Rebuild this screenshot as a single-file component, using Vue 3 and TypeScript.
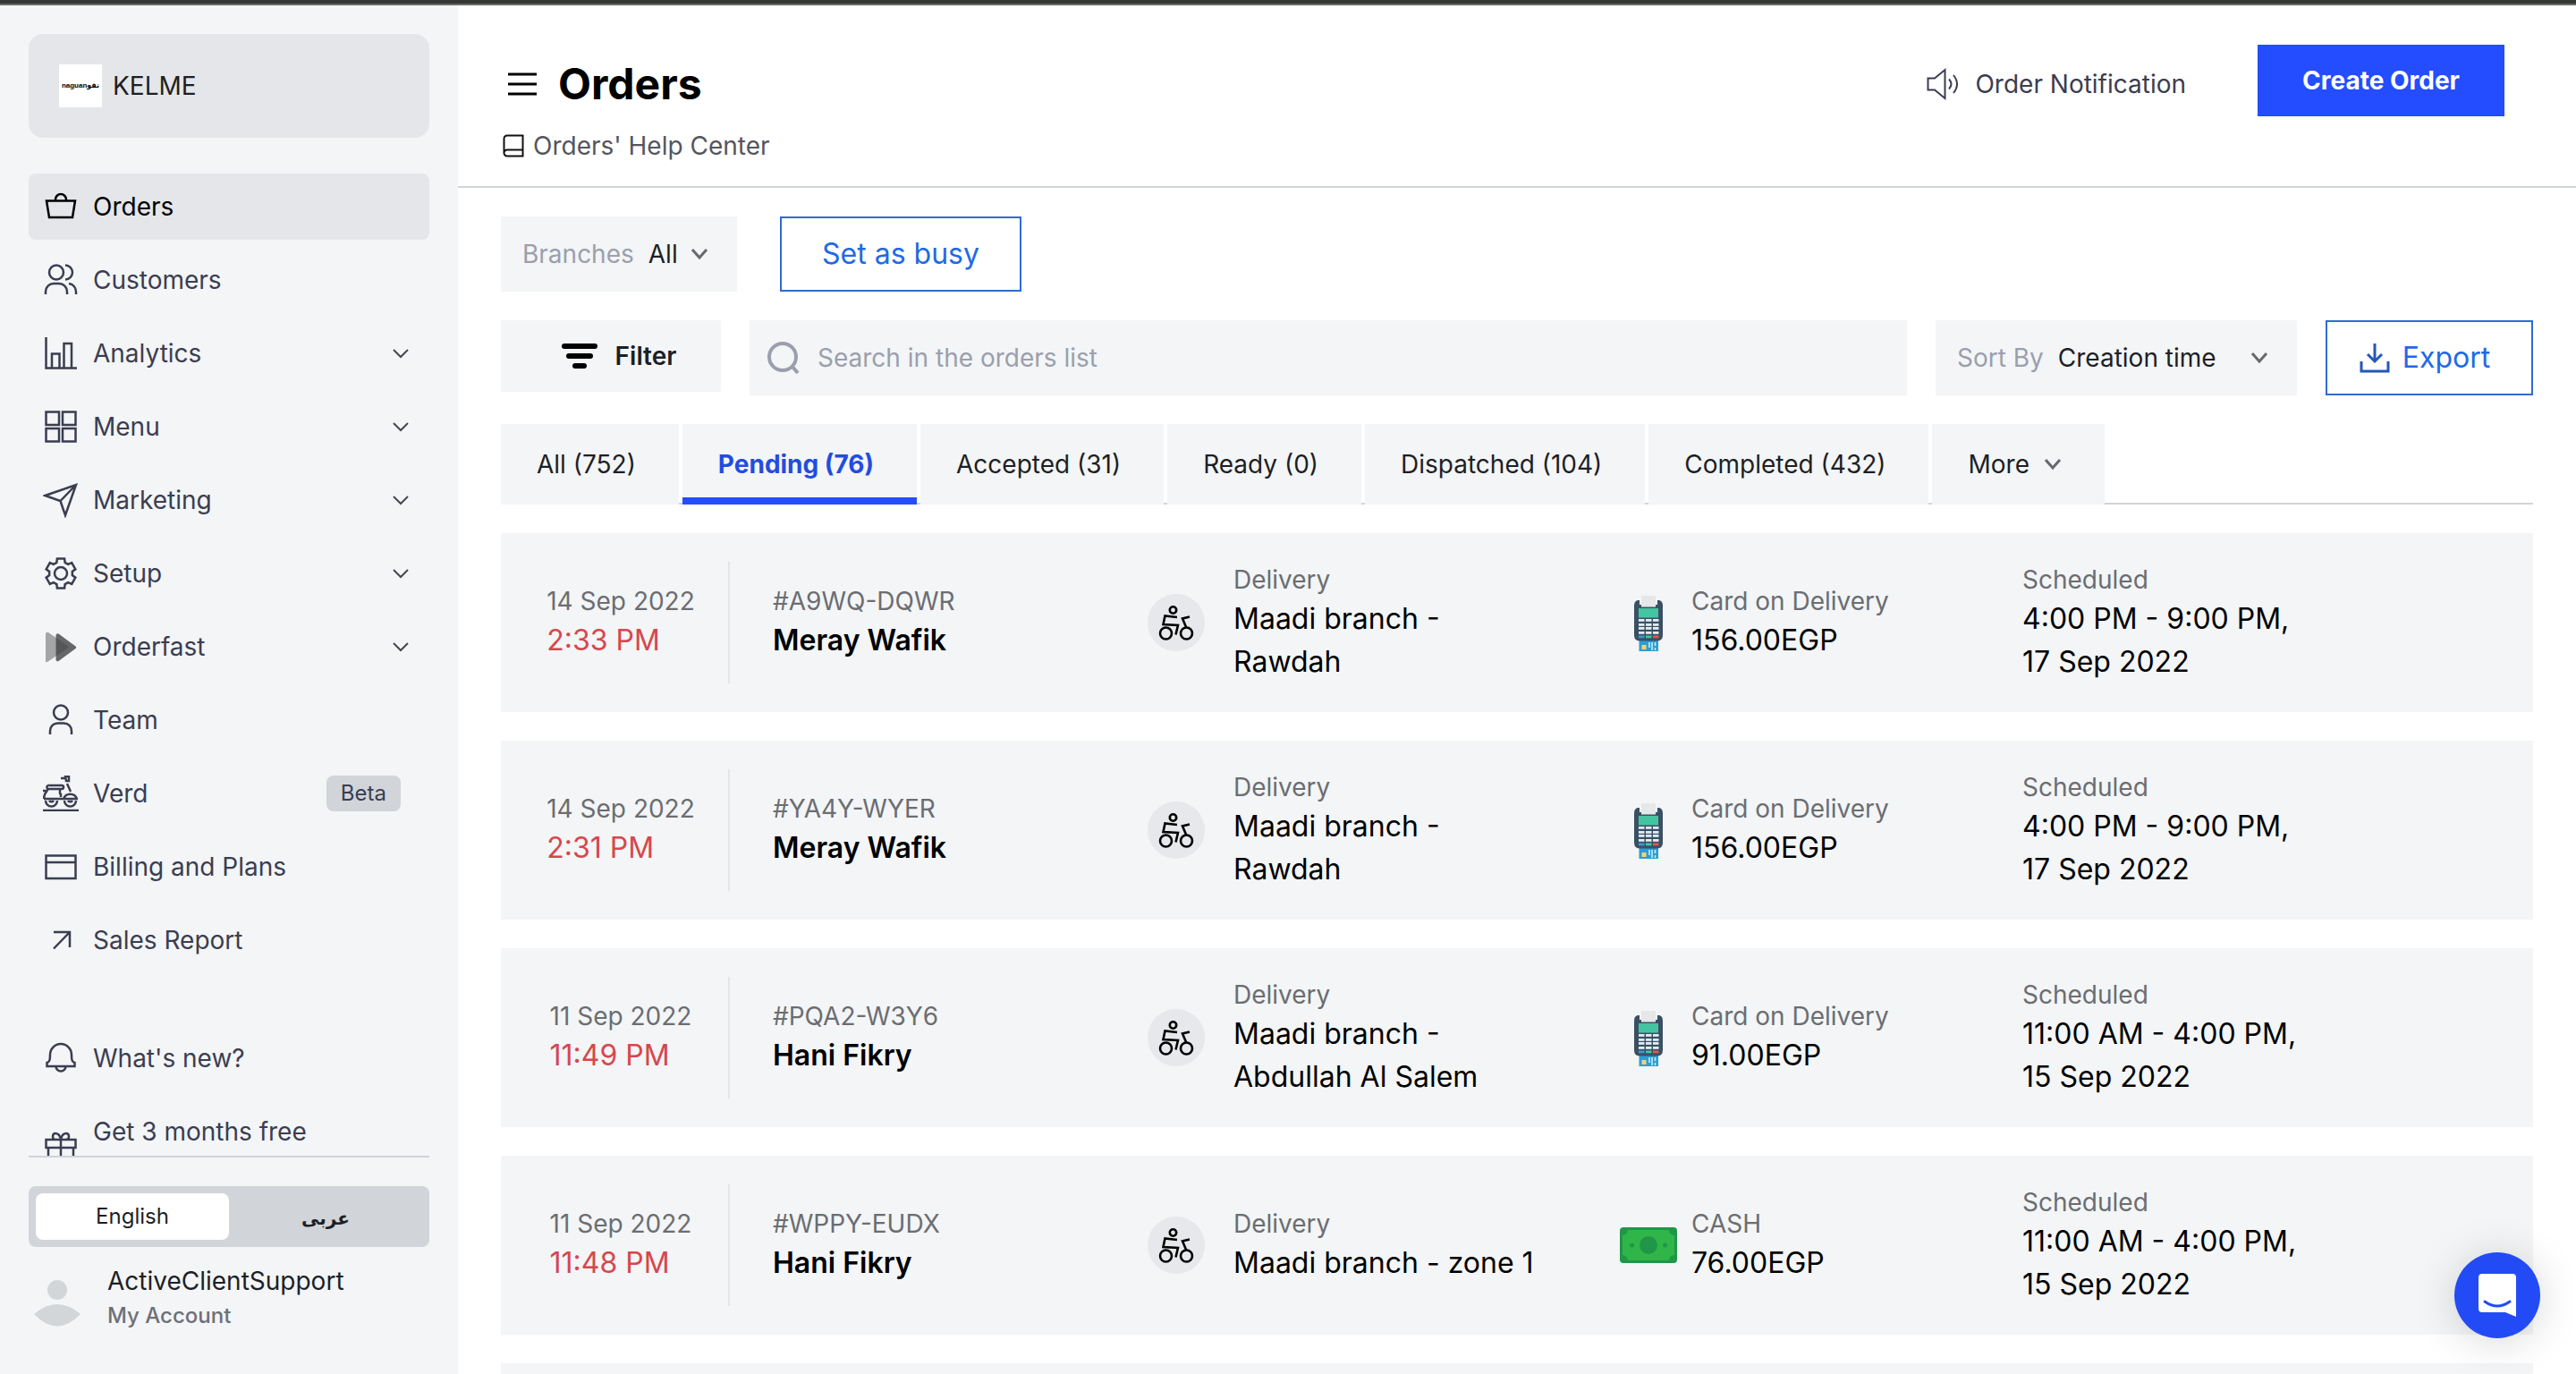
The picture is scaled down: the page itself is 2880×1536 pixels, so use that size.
<script setup lang="ts">
import { ref } from 'vue'

interface NavItem {
  label: string
  icon: string
  expandable?: boolean
  badge?: string
  active?: boolean
}

interface Order {
  date: string
  time: string
  code: string
  customer: string
  branch: string
  payment: string
  amount: string
  slot: string
  day: string
}

// Outline of a six-tooth cog centred in a 40-unit box.
function cogPath(): string {
  const point = (radius: number, degrees: number): string => {
    const angle = (degrees * Math.PI) / 180
    return `${(20 + radius * Math.cos(angle)).toFixed(2)} ${(20 + radius * Math.sin(angle)).toFixed(2)}`
  }
  const points: string[] = []
  for (let tooth = 0; tooth < 6; tooth++) {
    const mid = -90 + tooth * 60
    points.push(point(13, mid - 21), point(17, mid - 14), point(17, mid + 14), point(13, mid + 21))
  }
  return `M${points.join('L')}Z`
}

const iconPaths: Record<string, string> = {
  basket: 'M4 13.500H36L33 32H7ZM14 13.500V12a6 6 0 0 1 12 0v1.500',
  people:
    'M15 3.500a8 8 0 1 0 0 16a8 8 0 1 0 0-16ZM25 3.500a8 8 0 0 1 0 16M3 36v-3a9 9 0 0 1 9-9h6a9 9 0 0 1 9 9v3M29 24a9 9 0 0 1 8 9v3',
  chart: 'M3.500 2V36.500H38M10 36V20.500h8.500V36M23.500 36V9h8.500V36',
  grid: 'M3.500 3.500h14.500v14.500h-14.500ZM22 3.500h14.500v14.500h-14.500ZM3.500 22h14.500v14.500h-14.500ZM22 22h14.500v14.500h-14.500Z',
  plane: 'M2.500 15L37 3L25 37L19.500 21ZM19.500 21L37 3',
  cog: cogPath() + 'M20 13a7 7 0 1 0 0 14a7 7 0 1 0 0-14Z',
  person: 'M20 3.500a8 8 0 1 0 0 16a8 8 0 1 0 0-16ZM8 36v-4a8.500 8.500 0 0 1 8.500-8.500h7a8.500 8.500 0 0 1 8.500 8.500v4',
  card: 'M3.500 7.500h33v25.500h-33ZM3.500 15h33',
  arrow: 'M12 11H30V28M30 11L12 29.500',
  bell: 'M4.500 29v-4c3-1 3.500-3 3.500-9a12 12 0 0 1 24 0c0 6 .500 8 3.500 9v4ZM14.500 29a5.500 5.500 0 0 0 11 0',
  gift: 'M3.500 10h33v9h-33ZM6 19v17h28V19M20 10V36M20 10c-1-5-3-7-6-7c-4 0-4 7 0 7M20 10c1-5 3-7 6-7c4 0 4 7 0 7',
}

const mainNav: NavItem[] = [
  { label: 'Orders', icon: 'basket', active: true },
  { label: 'Customers', icon: 'people' },
  { label: 'Analytics', icon: 'chart', expandable: true },
  { label: 'Menu', icon: 'grid', expandable: true },
  { label: 'Marketing', icon: 'plane', expandable: true },
  { label: 'Setup', icon: 'cog', expandable: true },
  { label: 'Orderfast', icon: 'play', expandable: true },
  { label: 'Team', icon: 'person' },
  { label: 'Verd', icon: 'scooter', badge: 'Beta' },
  { label: 'Billing and Plans', icon: 'card' },
  { label: 'Sales Report', icon: 'arrow' },
]

const tabs = ['All (752)', 'Pending (76)', 'Accepted (31)', 'Ready (0)', 'Dispatched (104)', 'Completed (432)']
const activeTab = ref('Pending (76)')
const language = ref<'en' | 'ar'>('en')
const branch = ref('All')
const sortBy = ref('Creation time')
const query = ref('')

const orders: Order[] = [
  { date: '14 Sep 2022', time: '2:33 PM', code: '#A9WQ-DQWR', customer: 'Meray Wafik', branch: 'Maadi branch - Rawdah', payment: 'Card on Delivery', amount: '156.00EGP', slot: '4:00 PM - 9:00 PM,', day: '17 Sep 2022' },
  { date: '14 Sep 2022', time: '2:31 PM', code: '#YA4Y-WYER', customer: 'Meray Wafik', branch: 'Maadi branch - Rawdah', payment: 'Card on Delivery', amount: '156.00EGP', slot: '4:00 PM - 9:00 PM,', day: '17 Sep 2022' },
  { date: '11 Sep 2022', time: '11:49 PM', code: '#PQA2-W3Y6', customer: 'Hani Fikry', branch: 'Maadi branch - Abdullah Al Salem', payment: 'Card on Delivery', amount: '91.00EGP', slot: '11:00 AM - 4:00 PM,', day: '15 Sep 2022' },
  { date: '11 Sep 2022', time: '11:48 PM', code: '#WPPY-EUDX', customer: 'Hani Fikry', branch: 'Maadi branch - zone 1', payment: 'CASH', amount: '76.00EGP', slot: '11:00 AM - 4:00 PM,', day: '15 Sep 2022' },
]

const keyRows = [28, 33, 37, 42]
const keyColumns = [21, 29, 37]
</script>

<template>
  <div class="app">
    <div class="window-edge"></div>
    <div class="shell">
      <aside class="sidebar">
        <button class="store" type="button">
          <span class="store-logo" aria-hidden="true">naguanتقو</span>
          <span>KELME</span>
        </button>

        <nav class="nav" aria-label="Main">
          <a v-for="item in mainNav" :key="item.label" href="#" class="nav-item" :class="{ active: item.active }">
            <svg v-if="item.icon === 'play'" class="nav-icon" viewBox="0 0 40 40" aria-hidden="true">
              <path d="M3 5.500a2 2 0 0 1 3-1.500l22 15a1.500 1.500 0 0 1 0 2.500L5 37H3Z" fill="#444" opacity=".45" />
              <path d="M14.500 7a2 2 0 0 1 3-1.500l19 14a1.500 1.500 0 0 1 0 2.500l-19 14a2 2 0 0 1-3-1.500Z" fill="#444" opacity=".8" />
            </svg>
            <svg v-else-if="item.icon === 'scooter'" class="nav-icon line" viewBox="0 0 40 40" aria-hidden="true">
              <path d="M0 39H40M1 26H39M1 26c0-6 3-8 5-11h14M19 15v5l1 1v3M23 26a8 8 0 0 1 15 0M27 9l4 9M20 3h5M25 1h4v5h-3ZM0 17h4M7 11h14a2 2 0 0 1 0 4H6a2 2 0 0 1 1-4" />
              <path d="M3 28a6 6 0 0 0 13 0M7 28a3 3 0 0 0 5 0M24 28a6 6 0 0 0 13 0M28 28a3 3 0 0 0 5 0" />
            </svg>
            <svg v-else class="nav-icon line" viewBox="0 0 40 40" aria-hidden="true">
              <path :d="iconPaths[item.icon]" />
            </svg>
            <span class="nav-label">{{ item.label }}</span>
            <svg v-if="item.expandable" class="nav-chevron" viewBox="0 0 20 12" aria-hidden="true">
              <path d="M2 2L10 10L18 2" />
            </svg>
            <span v-if="item.badge" class="badge">{{ item.badge }}</span>
          </a>

          <a href="#" class="nav-item secondary">
            <svg class="nav-icon line" viewBox="0 0 40 40" aria-hidden="true"><path :d="iconPaths.bell" /></svg>
            <span class="nav-label">What's new?</span>
          </a>
          <a href="#" class="nav-item tall">
            <svg class="nav-icon line" viewBox="0 0 40 40" aria-hidden="true"><path :d="iconPaths.gift" /></svg>
            <span class="nav-label">Get 3 months free</span>
          </a>
        </nav>

        <div class="sidebar-foot">
          <div class="language" role="group" aria-label="Language">
            <button type="button" :class="{ chosen: language === 'en' }" @click="language = 'en'">English</button>
            <button type="button" lang="ar" class="arabic" :class="{ chosen: language === 'ar' }" @click="language = 'ar'">عربى</button>
          </div>
          <a href="#" class="account">
            <svg class="avatar" viewBox="0 0 52 52" aria-hidden="true">
              <circle cx="26" cy="11" r="11" />
              <path d="M0 38Q26 16 52 38Q26 65 0 38Z" />
            </svg>
            <span class="account-text">
              <span class="account-name">ActiveClientSupport</span>
              <span class="account-sub">My Account</span>
            </span>
          </a>
        </div>
      </aside>

      <main class="main">
        <header class="header">
          <div class="heading">
            <div class="title-row">
              <button class="menu-button" type="button" aria-label="Toggle menu">
                <svg viewBox="0 0 32 32" aria-hidden="true"><path d="M0 5H32M0 16H32M0 27H32" /></svg>
              </button>
              <h1>Orders</h1>
            </div>
            <a href="#" class="help">
              <svg viewBox="0 0 24 26" aria-hidden="true">
                <path d="M22.500 1.500H5a3.500 3.500 0 0 0-3.500 3.500V21a3.500 3.500 0 0 0 3.500 3.500H22.500ZM22.500 17.500H5a3.500 3.500 0 0 0-3.500 3.500" />
              </svg>
              Orders' Help Center
            </a>
          </div>
          <div class="header-actions">
            <button class="notify" type="button">
              <svg viewBox="0 0 38 38" aria-hidden="true">
                <path d="M1.500 12.500H9L20.500 3V35L9 25.500H1.500ZM25 13.500q5 5.500 0 11M30 9q8 10 0 20" />
              </svg>
              Order Notification
            </button>
            <button class="create" type="button">Create Order</button>
          </div>
        </header>

        <div class="content">
          <div class="row branch-row">
            <div class="picker branch-picker">
              <label for="branch">Branches</label>
              <select id="branch" v-model="branch">
                <option>All</option>
              </select>
              <svg class="chevron" viewBox="0 0 20 14" aria-hidden="true"><path d="M2 2L10 11L18 2" /></svg>
            </div>
            <button class="outline busy" type="button">Set as busy</button>
          </div>

          <div class="row tools-row">
            <button class="filter" type="button">
              <svg viewBox="0 0 40 28" aria-hidden="true"><path d="M3 3H37M8 14H32M15 25H25" /></svg>
              Filter
            </button>
            <div class="search">
              <svg viewBox="0 0 38 38" aria-hidden="true"><path d="M17 3a15 15 0 1 0 0 30a15 15 0 1 0 0-30ZM28 29L34 36" /></svg>
              <input v-model="query" type="search" placeholder="Search in the orders list" aria-label="Search in the orders list" />
            </div>
            <div class="picker sort-picker">
              <label for="sort">Sort By</label>
              <select id="sort" v-model="sortBy">
                <option>Creation time</option>
              </select>
              <svg class="chevron" viewBox="0 0 20 14" aria-hidden="true"><path d="M2 2L10 11L18 2" /></svg>
            </div>
            <button class="outline export" type="button">
              <svg viewBox="0 0 34 34" aria-hidden="true"><path d="M17 1V21M9 13L17 21L25 13M2 21V32H32V21" /></svg>
              Export
            </button>
          </div>

          <div class="tabs" role="tablist">
            <button v-for="tab in tabs" :key="tab" type="button" role="tab" class="tab" :class="{ current: tab === activeTab }" :aria-selected="tab === activeTab" @click="activeTab = tab">
              {{ tab }}
            </button>
            <button type="button" class="tab more">
              More
              <svg class="chevron" viewBox="0 0 20 14" aria-hidden="true"><path d="M2 2L10 11L18 2" /></svg>
            </button>
          </div>

          <ul class="orders">
            <li v-for="order in orders" :key="order.code" class="order">
              <div class="cell when">
                <div>
                  <div class="small">{{ order.date }}</div>
                  <div class="large time">{{ order.time }}</div>
                </div>
              </div>
              <div class="cell who">
                <div>
                  <div class="small">{{ order.code }}</div>
                  <div class="large name">{{ order.customer }}</div>
                </div>
              </div>
              <div class="cell where">
                <svg class="rider" viewBox="0 0 64 64" aria-hidden="true">
                  <circle cx="32" cy="32" r="32" fill="#e7e8eb" />
                  <g fill="none" stroke="#000" stroke-width="2.600">
                    <circle cx="28.500" cy="18" r="3.700" />
                    <path d="M33 26L19.500 24.500L17.500 34L34 35L31.500 45.500M47 25.500L39 27.500L43.500 38" />
                    <circle cx="20.500" cy="44" r="6.500" />
                    <circle cx="43.500" cy="44" r="6.500" />
                  </g>
                </svg>
                <div class="branch">
                  <div class="small">Delivery</div>
                  <div class="large">{{ order.branch }}</div>
                </div>
              </div>
              <div class="cell pay">
                <svg v-if="order.payment === 'CASH'" class="pay-icon" viewBox="0 0 64 64" aria-hidden="true">
                  <rect y="12" width="64" height="40" rx="4" fill="#1f9648" />
                  <path d="M9 15H55a6 6 0 0 0 6 6V43a6 6 0 0 0-6 6H9a6 6 0 0 0-6-6V21a6 6 0 0 0 6-6Z" fill="#30b648" />
                  <circle cx="32" cy="32" r="10" fill="#1f9648" />
                  <circle cx="13.500" cy="32" r="2.500" fill="#1f9648" />
                  <circle cx="50.500" cy="32" r="2.500" fill="#1f9648" />
                </svg>
                <svg v-else class="pay-icon" viewBox="0 0 64 64" aria-hidden="true">
                  <rect x="21.500" y="50" width="21.500" height="14" fill="#2a9fd6" />
                  <rect x="24.500" y="57" width="5" height="5" fill="#f3d27a" />
                  <path d="M33 54V60M36 54V63M39.500 54V58M39.500 60V63" stroke="#d9effa" stroke-width="1.500" />
                  <path d="M20 7H44Q48 8 48 13V46Q48 52 42 52.500H22Q16 52 16 46V13Q16 8 20 7Z" fill="#3a5064" />
                  <rect x="22" y="5" width="20" height="7" fill="#f3f5f6" />
                  <rect x="24" y="2" width="16" height="12.500" fill="#e6e7e8" />
                  <rect x="21" y="16" width="22" height="10.500" fill="#44c4a1" />
                  <template v-for="y in keyRows" :key="y">
                    <rect v-for="x in keyColumns" :key="x" :x="x" :y="y" width="6.500" height="2.800" fill="#e4edf6" />
                  </template>
                  <rect x="21" y="46.500" width="6.500" height="2.800" fill="#3b97d3" />
                  <rect x="29" y="46.500" width="6.500" height="2.800" fill="#44c4a1" />
                  <rect x="37" y="46.500" width="6.500" height="2.800" fill="#e2574c" />
                </svg>
                <div>
                  <div class="small">{{ order.payment }}</div>
                  <div class="large">{{ order.amount }}</div>
                </div>
              </div>
              <div class="cell">
                <div>
                  <div class="small">Scheduled</div>
                  <div class="large">{{ order.slot }}</div>
                  <div class="large">{{ order.day }}</div>
                </div>
              </div>
            </li>
            <li class="order" aria-hidden="true"></li>
          </ul>
        </div>
      </main>
    </div>

    <button class="chat" type="button" aria-label="Open chat">
      <svg viewBox="0 0 42 48" aria-hidden="true">
        <path d="M4 0H38a4 4 0 0 1 4 4V48L30 43H4a4 4 0 0 1-4-4V4a4 4 0 0 1 4-4Z" fill="#fff" />
        <path d="M7 31Q21 41 35 31" fill="none" stroke="#234bf5" stroke-width="3" stroke-linecap="round" />
      </svg>
    </button>
  </div>
</template>

<style>
body {
  margin: 0;
  background: #fff;
}
</style>

<style scoped>
.app,
.app * {
  box-sizing: border-box;
}

.app {
  display: flex;
  flex-direction: column;
  height: 100vh;
  overflow: hidden;
  font-family: Inter, "Noto Sans", "DejaVu Sans", sans-serif;
  font-size: 28px;
  line-height: 40px;
  color: #1d1f26;
}

button,
input,
select {
  margin: 0;
  padding: 0;
  border: 0;
  border-radius: 0;
  background: none;
  font: inherit;
  color: inherit;
  cursor: pointer;
}

a {
  color: inherit;
  text-decoration: none;
}

svg {
  display: block;
  flex: none;
}

.window-edge {
  flex: none;
  height: 6px;
  background: #353735;
  border-bottom: 2px solid #676867;
}

.shell {
  display: flex;
  flex: 1;
  min-height: 0;
}

.sidebar {
  display: flex;
  flex-direction: column;
  flex: none;
  width: 512px;
  padding: 32px 32px 46px;
  background: #f3f5f7;
}

.store {
  display: flex;
  align-items: center;
  flex: none;
  gap: 12px;
  height: 116px;
  padding: 0 34px;
  border-radius: 16px;
  background: #e5e6e9;
}

.store-logo {
  display: flex;
  align-items: center;
  justify-content: center;
  width: 48px;
  height: 48px;
  overflow: hidden;
  background: #fff;
  color: #000;
  font-family: "Liberation Sans", "DejaVu Sans", sans-serif;
  font-size: 8px;
  font-weight: 700;
  line-height: 12px;
  white-space: nowrap;
}

.nav {
  display: flex;
  flex-direction: column;
  flex: 1;
  gap: 8px;
  min-height: 0;
  margin-top: 40px;
  overflow: hidden;
  border-bottom: 2px solid #d1d4d7;
}

.nav-item {
  display: flex;
  align-items: center;
  flex: none;
  gap: 16px;
  height: 74px;
  padding: 0 32px 0 16px;
  border-radius: 8px;
  color: #3b3d50;
}

.nav-item.active {
  background: #e5e6e9;
  color: #000;
}

.nav-item.secondary {
  margin-top: 50px;
}

.nav-item.tall {
  height: 112px;
}

.nav-item.tall .nav-label {
  align-self: flex-start;
  padding-top: 17px;
}

.nav-label {
  flex: 1;
}

.nav-icon {
  width: 40px;
  height: 40px;
}

.line {
  fill: none;
  stroke: currentColor;
  stroke-width: 2.5px;
}

.nav-chevron {
  width: 20px;
  height: 12px;
  margin-right: -10px;
  fill: none;
  stroke: #45474f;
  stroke-width: 2px;
}

.badge {
  padding: 0 16px;
  border-radius: 8px;
  background: #d1d4d9;
  font-size: 24px;
}

.sidebar-foot {
  flex: none;
  padding-top: 32px;
}

.language {
  display: flex;
  height: 68px;
  padding: 8px;
  border-radius: 8px;
  background: #d1d4d8;
  font-size: 24px;
}

.language button {
  flex: 1;
  border-radius: 8px;
}

.language .arabic {
  padding-top: 4px;
  font-size: 20px;
  font-weight: 600;
}

.language .chosen {
  background: #fff;
}

.account {
  display: flex;
  align-items: center;
  gap: 30px;
  margin-top: 18px;
  padding-left: 6px;
}

.avatar {
  width: 52px;
  height: 52px;
  margin-top: 12px;
  fill: #d3d6d9;
}

.account-text {
  display: flex;
  flex-direction: column;
}

.account-sub {
  font-size: 24px;
  line-height: 38px;
  font-weight: 500;
  color: #6d7077;
}

.main {
  display: flex;
  flex-direction: column;
  flex: 1;
  min-width: 0;
}

.header {
  display: flex;
  align-items: flex-start;
  justify-content: space-between;
  flex: none;
  height: 204px;
  padding: 44px 80px 0 48px;
  border-bottom: 2px solid #d1d4d7;
}

.heading {
  padding-top: 14px;
}

.title-row {
  display: flex;
  align-items: center;
  gap: 16px;
  height: 60px;
}

.menu-button {
  padding: 8px;
}

.menu-button svg {
  width: 32px;
  height: 32px;
  fill: none;
  stroke: #000;
  stroke-width: 3px;
}

h1 {
  margin: 0;
  font-size: 48px;
  line-height: 60px;
  font-weight: 700;
  color: #000;
}

.help {
  display: flex;
  align-items: center;
  gap: 10px;
  margin-top: 19px;
  padding-left: 2px;
  color: #54565d;
}

.help svg {
  width: 24px;
  height: 26px;
  fill: none;
  stroke: #111;
  stroke-width: 2px;
}

.header-actions {
  display: flex;
  align-items: flex-start;
  gap: 80px;
}

.notify {
  display: flex;
  align-items: center;
  gap: 16px;
  height: 88px;
  color: #3b3d50;
}

.notify svg {
  width: 38px;
  height: 38px;
  fill: none;
  stroke: currentColor;
  stroke-width: 2px;
}

.create {
  height: 80px;
  padding: 0 50px;
  background: #234dff;
  color: #fff;
  font-weight: 700;
}

.content {
  flex: 1;
  min-height: 0;
  padding: 32px 48px 0;
  overflow: hidden;
}

.row {
  display: flex;
  align-items: flex-start;
  gap: 32px;
  margin-bottom: 32px;
}

.branch-row {
  gap: 48px;
}

.picker {
  display: flex;
  align-items: center;
  height: 84px;
  padding: 0 32px 0 24px;
  background: #f3f5f6;
}

.picker label {
  margin-right: 16px;
  color: #9b9fad;
}

.picker select {
  appearance: none;
  flex: 1;
  min-width: 0;
  color: #1d1f26;
}

.branch-picker {
  width: 264px;
}

.sort-picker {
  width: 404px;
}

.chevron {
  width: 20px;
  height: 14px;
  fill: none;
  stroke: #66696f;
  stroke-width: 3px;
}

.outline {
  display: flex;
  align-items: center;
  justify-content: center;
  gap: 14px;
  height: 84px;
  border: 2px solid #2f6bcf;
  color: #1f6ae4;
  font-size: 32px;
}

.busy {
  width: 270px;
}

.export {
  width: 232px;
  padding-right: 10px;
}

.export svg {
  width: 34px;
  height: 34px;
  fill: none;
  stroke: #2457b8;
  stroke-width: 3px;
}

.filter {
  display: flex;
  align-items: center;
  justify-content: center;
  gap: 20px;
  width: 246px;
  height: 80px;
  padding-left: 18px;
  background: #f3f5f6;
  font-weight: 600;
}

.filter svg {
  width: 40px;
  height: 28px;
  fill: none;
  stroke: #000;
  stroke-width: 6px;
  stroke-linecap: round;
}

.search {
  display: flex;
  align-items: center;
  flex: 1;
  gap: 18px;
  height: 84px;
  padding: 0 20px;
  background: #f3f5f6;
}

.search svg {
  width: 38px;
  height: 38px;
  fill: none;
  stroke: #9b9fad;
  stroke-width: 4px;
}

.search input {
  flex: 1;
  min-width: 0;
  height: 84px;
  outline: 0;
}

.search input::placeholder {
  color: #9b9fad;
  opacity: 1;
}

.tabs {
  display: flex;
  gap: 4px;
  height: 90px;
  background: linear-gradient(#d1d4d7, #d1d4d7) bottom / 100% 2px no-repeat;
}

.tab {
  height: 90px;
  padding: 0 48px 0 40px;
  background: #f3f5f6;
  white-space: nowrap;
}

.tab.current {
  padding-top: 8px;
  border-bottom: 8px solid #234dff;
  color: #234ce0;
  font-weight: 700;
}

.tab.more {
  display: flex;
  align-items: center;
  gap: 16px;
}

.orders {
  margin: 32px 0 0;
  padding: 0;
  list-style: none;
}

.order {
  display: grid;
  grid-template-columns: 256px 467fr 528fr 450fr 571fr;
  min-height: 200px;
  margin-bottom: 32px;
  padding: 32px 0;
  background: #f3f5f6;
}

.cell {
  display: flex;
  align-items: center;
}

.when {
  justify-content: center;
  padding: 0 32px 0 46px;
  border-right: 2px solid #e3e5e9;
}

.who {
  padding-left: 48px;
}

.where {
  gap: 32px;
}

.branch {
  width: 340px;
}

.rider,
.pay-icon {
  width: 64px;
  height: 64px;
}

.pay {
  gap: 16px;
}

.small {
  color: #6b6d72;
}

.large {
  font-size: 32px;
  line-height: 48px;
  color: #000;
}

.time {
  color: #d6474d;
}

.name {
  font-weight: 600;
}

.chat {
  position: fixed;
  right: 40px;
  bottom: 40px;
  display: flex;
  align-items: center;
  justify-content: center;
  width: 96px;
  height: 96px;
  border-radius: 50%;
  background: #234bf5;
  box-shadow: 0 4px 48px rgb(0 0 0 / 16%);
}

.chat svg {
  width: 42px;
  height: 48px;
}
</style>
